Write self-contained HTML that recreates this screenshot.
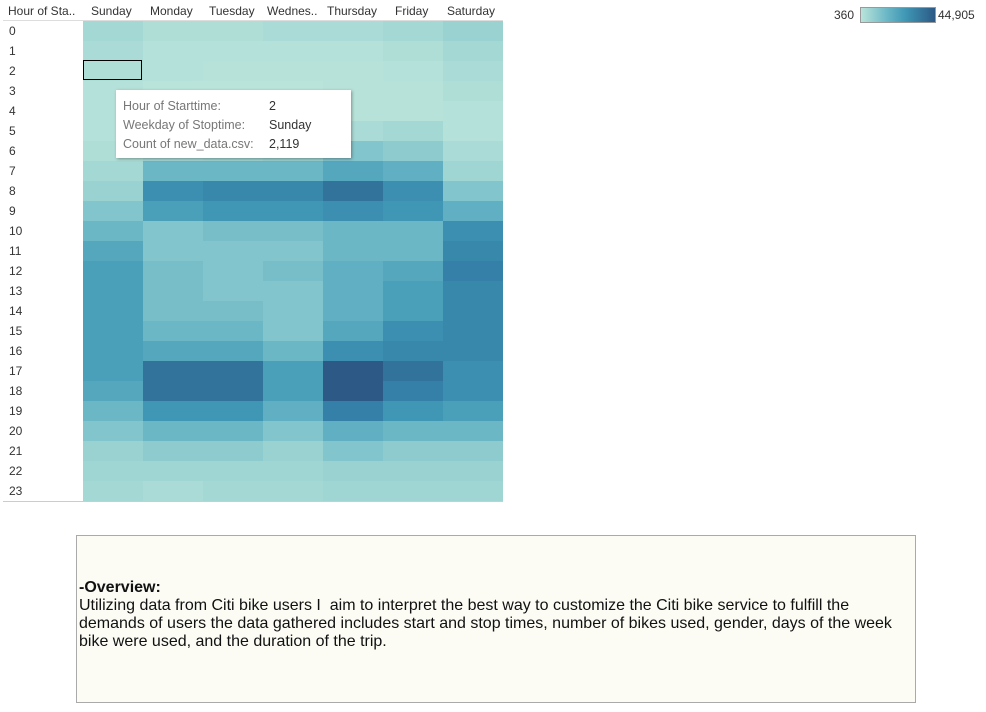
<!DOCTYPE html><html><head><style>
body{margin:0;width:986px;height:712px;background:#fff;font-family:"Liberation Sans",sans-serif;position:relative;overflow:hidden}
.h{position:absolute;top:4px;font-size:12px;color:#333}
.r{position:absolute;left:9px;font-size:12px;color:#333}
.c{position:absolute;width:60px;height:20px}
#tip{position:absolute;left:116px;top:90px;width:235px;height:68px;background:#fff;box-shadow:1px 1px 3px rgba(0,0,0,.35);font-size:12.5px;line-height:19px}
#tip div{position:absolute;left:7px}
</style></head><body>
<div class="h" style="left:8px">Hour of Sta..</div>
<div class="h" style="left:91px">Sunday</div>
<div class="h" style="left:150px">Monday</div>
<div class="h" style="left:209px">Tuesday</div>
<div class="h" style="left:267px">Wednes..</div>
<div class="h" style="left:327px">Thursday</div>
<div class="h" style="left:395px">Friday</div>
<div class="h" style="left:447px">Saturday</div>
<div style="position:absolute;left:3px;top:20px;width:500px;height:1px;background:#ddd"></div>
<div style="position:absolute;left:3px;top:501px;width:500px;height:1px;background:#ccc"></div>
<div id="g"></div>
<div style="position:absolute;left:83px;top:60px;width:59px;height:20px;border:1px solid #000;box-sizing:border-box"></div>
<div id="tip">
<div style="top:7px;color:#777">Hour of Starttime:</div><div style="top:7px;left:153px;color:#333">2</div>
<div style="top:26px;color:#777">Weekday of Stoptime:</div><div style="top:26px;left:153px;color:#333">Sunday</div>
<div style="top:45px;color:#777">Count of new_data.csv:</div><div style="top:45px;left:153px;color:#333">2,119</div>
</div>
<div style="position:absolute;left:834px;top:8px;font-size:12px;color:#333">360</div>
<div style="position:absolute;left:860px;top:7px;width:74px;height:14px;border:1px solid #999;background:linear-gradient(90deg,#b9e4da,#6bb7c6 35%,#3f97b5 60%,#2c5985)"></div>
<div style="position:absolute;left:938px;top:8px;font-size:12px;color:#333">44,905</div>
<div style="position:absolute;left:76px;top:535px;width:838px;height:166px;border:1px solid #aaa;background:#fcfcf5;font-size:16px;color:#111;line-height:18px">
<div style="position:absolute;left:2px;top:43px;width:836px;white-space:nowrap"><b>-Overview:</b><br>Utilizing data from Citi bike users I&nbsp; aim to interpret the best way to customize the Citi bike service to fulfill the<br>demands of users the data gathered includes start and stop times, number of bikes used, gender, days of the week<br>bike were used, and the duration of the trip.</div></div>
<script>
var L=[[2,1,1,1.5,1.5,2,3],[1.5,.5,.5,.5,.5,1,2],[1,.5,.3,.3,.3,.5,1.5],[.5,0,0,0,.3,.3,1],[.5,0,0,0,.3,.3,.5],[.5,.5,1,1,1.5,2,.5],[1,2,2.5,3,4,3.5,1.5],[2,5,5,5,6,5.5,2.5],[3,7.5,8,8,9,7.5,4],[4,6.5,7,7,7.5,7,5.5],[5,4,4.5,4.5,5,5,7.5],[6,4,4,4,5,5,8],[6.5,4.5,4,4.5,5.5,6,8.5],[6.5,4.5,4,4,5.5,6.5,8],[6.5,4.5,4.5,4,5.5,6.5,8],[6.5,5,5,4,6,7.5,8],[6.5,6,6,5,7.5,8,8],[6.5,9,9,6.5,10,9,7.5],[6,9,9,6.5,10,8.5,7.5],[5,7,7,5.5,8.5,7,6.5],[4,5,5,4,5.5,5,5],[3,3.5,3.5,3,4,3.5,3.5],[2.5,2.5,2.5,2.5,3,3,3],[2,1.5,2,2,2.5,2.5,2.5]];
var S=[[0,[185,228,218]],[3,[154,210,209]],[5,[107,183,198]],[7,[63,151,181]],[8.5,[53,128,168]],[10,[44,89,133]]];
function col(v){for(var i=0;i<S.length-1;i++){if(v<=S[i+1][0]){var t=(v-S[i][0])/(S[i+1][0]-S[i][0]);var a=S[i][1],b=S[i+1][1];return 'rgb('+a.map(function(x,k){return Math.round(x+(b[k]-x)*t)}).join(',')+')';}}return 'rgb(44,89,133)';}
var h='';for(var r=0;r<24;r++){h+='<div class="r" style="top:'+(24+r*20)+'px">'+r+'</div>';for(var c=0;c<7;c++)h+='<div class="c" style="left:'+(83+c*60)+'px;top:'+(21+r*20)+'px;background:'+col(L[r][c])+'"></div>';}
document.getElementById('g').innerHTML=h;
</script>
</body></html>
